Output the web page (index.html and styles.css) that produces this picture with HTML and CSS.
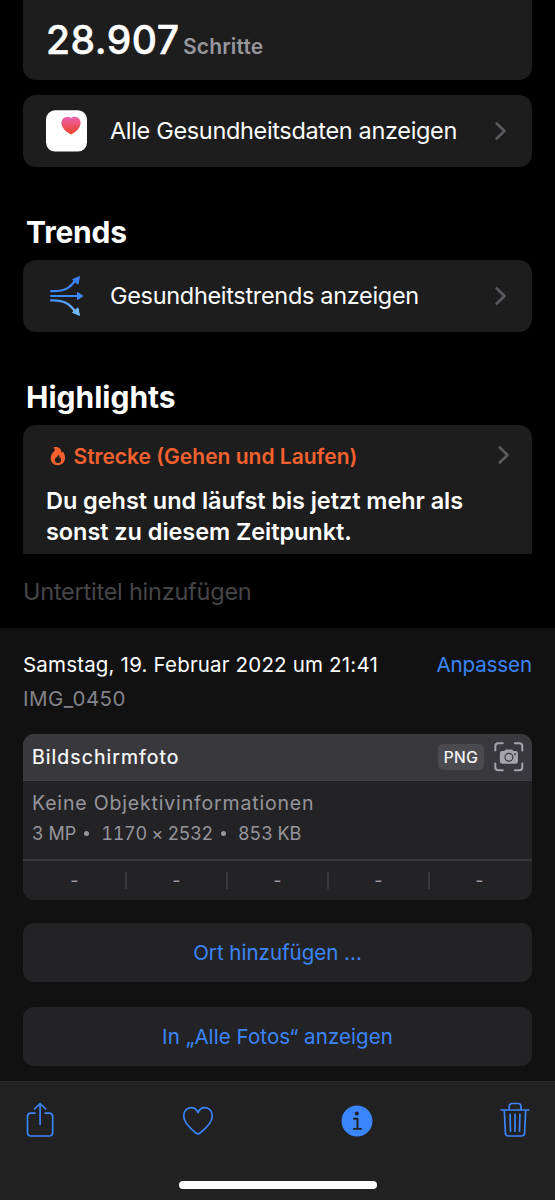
FILE: index.html
```html
<!DOCTYPE html>
<html lang="de">
<head>
<meta charset="utf-8">
<title>IMG_0450</title>
<link rel="stylesheet" href="styles.css">
</head>
<body>
<main class="screen">
  <section class="photo">
    <div class="card steps"><span class="steps-value">28.907</span><span class="steps-unit">Schritte</span></div>
    <div class="card row all-data">
      <svg class="row-icon" width="42" height="42" viewBox="0 0 42 42">
        <defs><linearGradient id="heart" x1="0" y1="0" x2="0" y2="1"><stop offset="0" stop-color="#e964b2"/><stop offset="1" stop-color="#f04323"/></linearGradient></defs>
        <rect x="0" y=".3" width="41" height="41.3" rx="9" fill="#fff"/>
        <path fill="url(#heart)" d="M25.100 8.200C23.300 6.500 20.400 6.400 18.500 7.600C14.500 10.200 14.600 15.300 18 19.200C19.800 21.200 22.200 22.900 24.100 24C24.800 24.400 25.300 24.400 26 24C28 22.900 30.300 21.200 32.100 19.200C35.500 15.300 35.600 10.200 31.600 7.600C29.700 6.400 26.900 6.500 25.100 8.200Z"/>
      </svg>
      <span class="row-label label-all">Alle Gesundheitsdaten anzeigen</span>
      <svg class="chevron" width="12" height="20" viewBox="0 0 12 20"><path d="M1.700 2.500L9.500 10L1.700 17.500"/></svg>
    </div>
    <h2 class="heading heading-trends">Trends</h2>
    <div class="card row">
      <svg class="row-icon" width="42" height="42" viewBox="0 0 42 42">
        <defs><linearGradient id="flow" gradientUnits="userSpaceOnUse" x1="0" y1="22" x2="0" y2="41"><stop offset="0" stop-color="#3f8cff"/><stop offset="1" stop-color="#7cc6fb"/></linearGradient></defs>
        <g fill="none" stroke-width="2.200" stroke-linecap="round">
          <path stroke="#3c87fb" d="M5.100 16.100C19 17 24.300 12.500 30 4.500"/>
          <path stroke="#3c8afb" d="M5.100 21H33"/>
          <path stroke="url(#flow)" d="M5.100 25.400C19 24.800 24.300 29.500 30 37.500"/>
        </g>
        <path fill="#3c82f5" stroke="#3c82f5" stroke-linejoin="round" d="M33.500 1.600L26.500 4.600L32 9.200Z"/>
        <path fill="#3c8afb" stroke="#3c8afb" stroke-linejoin="round" d="M31.500 17.500L37 21L31.500 24.500Z"/>
        <path fill="#70b9fa" stroke="#70b9fa" stroke-linejoin="round" d="M33.500 40.400L26.500 37.400L32 32.800Z"/>
      </svg>
      <span class="row-label label-trends">Gesundheitstrends anzeigen</span>
      <svg class="chevron" width="12" height="20" viewBox="0 0 12 20"><path d="M1.700 2.500L9.500 10L1.700 17.500"/></svg>
    </div>
    <h2 class="heading heading-highlights">Highlights</h2>
    <div class="card highlight">
      <div class="topic">
        <svg class="flame" width="16" height="20" viewBox="0 0 16 20"><path fill="#f4612e" fill-rule="evenodd" d="M3.100 1.300C8.700-.2 11.600 3.100 11.300 6.700C12.100 6.500 12.400 5.800 12.400 5.200C14.300 6.800 15 9.200 15 11.600C15 16.200 12 19.200 7.900 19.200C3.700 19.200.7 16.400.7 12.200C.7 9.200 2.200 7.200 4 5.600C5.100 4.500 5.200 2.600 3.100 1.300ZM8.600 8.500C8.700 11.100 4.900 11.200 4.900 14.100C4.900 16 6.200 17.100 7.900 17.100C9.800 17.100 11.100 15.800 11.100 13.900C11.100 12.900 10.700 12 10.100 11.400C10 12 9.700 12.300 9.300 12.500C9.900 10.900 9.600 9.400 8.600 8.500Z"/></svg>
        <span class="topic-label">Strecke (Gehen und Laufen)</span>
        <svg class="chevron" width="12" height="20" viewBox="0 0 12 20"><path d="M1.700 1.500L9.500 9L1.700 16.500"/></svg>
      </div>
      <p class="summary">Du gehst und läufst bis jetzt mehr als<br>sonst zu diesem Zeitpunkt.</p>
    </div>
  </section>
  <div class="caption"><span>Untertitel hinzufügen</span></div>
  <section class="info">
    <div class="date-row"><span class="date">Samstag, 19. Februar 2022 um 21:41</span><a class="adjust">Anpassen</a></div>
    <div class="filename">IMG_0450</div>
    <div class="meta">
      <div class="meta-head">
        <span class="meta-title">Bildschirmfoto</span>
        <span class="badge">PNG</span>
        <svg width="30" height="30" viewBox="0 0 30 30">
          <path fill="none" stroke="#a5a4aa" stroke-width="2" stroke-linecap="round" d="M1.300 8.500V4.300Q1.300 1.300 4.300 1.300H8.800M20.800 1.300H25.300Q28.300 1.300 28.300 4.300V8.500M28.300 21.400V25.300Q28.300 28.300 25.300 28.300H20.800M8.800 28.300H4.300Q1.300 28.300 1.300 25.300V21.400"/>
          <path fill="#a5a4aa" d="M8.200 9.100H10.100L11.300 7.800Q11.700 7.400 12.300 7.400H17.300Q17.900 7.400 18.300 7.800L19.500 9.100H21.600Q23.900 9.100 23.900 11.300V19.500Q23.900 21.800 21.600 21.800H8.200Q5.900 21.800 5.900 19.500V11.300Q5.900 9.100 8.200 9.100Z"/>
          <circle cx="14.900" cy="15.200" r="3.900" fill="#a5a4aa" stroke="#39393d" stroke-width="1.200"/>
          <circle cx="20.900" cy="12.200" r="1" fill="#39393d"/>
        </svg>
      </div>
      <div class="meta-body">
        <div class="lens">Keine Objektivinformationen</div>
        <div class="specs"><span>3 MP</span><i></i><span class="pixels">1170 × 2532</span><i></i><span class="size">853 KB</span></div>
      </div>
      <div class="exif"><span>-</span><span>-</span><span>-</span><span>-</span><span>-</span></div>
    </div>
    <div class="action action-place"><span>Ort hinzufügen ...</span></div>
    <div class="action action-all"><span>In „Alle Fotos“ anzeigen</span></div>
  </section>
  <nav class="toolbar">
    <div class="tools">
      <svg class="share" width="28" height="36" viewBox="0 0 28 36"><g fill="none" stroke="#3b85fb" stroke-width="1.700" stroke-linecap="round" stroke-linejoin="round"><path d="M9 11.200H5Q1.500 11.200 1.500 14.700V30.500Q1.500 34 5 34H23.200Q26.700 34 26.700 30.500V14.700Q26.700 11.200 23.200 11.200H19.200"/><path d="M14.100 22.300V1.500M8.500 7L14.100 1.500L19.700 7"/></g></svg>
      <svg class="like" width="32" height="30" viewBox="0 0 32 30"><path fill="none" stroke="#3b85fb" stroke-width="1.700" stroke-linejoin="round" d="M16 6.600C14.600 3.600 12.100 1.700 9.200 1.700C4.800 1.700 1.700 5.200 1.700 10C1.700 17 8.800 23 14.300 27.200Q16 28.400 17.700 27.200C23.200 23 30.300 17 30.300 10C30.300 5.200 27.200 1.700 22.800 1.700C19.900 1.700 17.400 3.600 16 6.600Z"/></svg>
      <svg class="details" width="32" height="32" viewBox="0 0 32 32"><circle cx="16" cy="16" r="15.500" fill="#3b85fb"/><circle cx="15.800" cy="8.500" r="2" fill="#202020"/><path fill="none" stroke="#202020" stroke-width="1.900" stroke-linecap="round" stroke-linejoin="round" d="M13 13.700H16.500V23.900M12.800 23.900H20"/></svg>
      <svg class="trash" width="30" height="36" viewBox="0 0 30 36"><g fill="none" stroke="#3b85fb" stroke-width="1.700" stroke-linecap="round" stroke-linejoin="round"><path d="M1.200 8H28.800M9.200 8V4.600Q9.200 1.500 12.200 1.500H18Q21 1.500 21 4.600V8M4.300 8.300L5.400 31Q5.600 34 8.500 34H21.500Q24.400 34 24.600 31L25.700 8.300"/><path d="M10.100 12.400L10.500 29.300M15 12.400V29.300M19.900 12.400L19.500 29.300"/></g></svg>
    </div>
    <div class="home-indicator"></div>
  </nav>
</main>
</body>
</html>
```
FILE: styles.css
```css
* { box-sizing: border-box; }
body { margin: 0; background: #000; color: #fff; font-family: Inter, "Liberation Sans", sans-serif; }
svg { display: block; flex: none; }
.screen { width: 555px; height: 1200px; overflow: hidden; display: flex; flex-direction: column; }
.screen span, .adjust { white-space: nowrap; }
.photo { height: 554px; flex: none; overflow: hidden; padding: 0 23px; }
.card { background: #1d1d1d; border-radius: 13px; }
.steps { height: 80px; border-radius: 0 0 13px 13px; padding-left: 23px; padding-top: 16px; line-height: 47px; display: flex; align-items: baseline; }
.steps-value { font-size: 39px; font-weight: 500; letter-spacing: .5px; -webkit-text-stroke: .5px #fff; }
.steps-unit { font-size: 21px; font-weight: 600; color: #97969d; margin-left: 3.500px; letter-spacing: .15px; }
.row { height: 72px; display: flex; align-items: center; padding: 0 25px 0 23px; }
.all-data { margin-top: 15px; }
.row-label { flex: 1; margin-left: 22px; font-size: 23.500px; line-height: 32px; }
.label-all { letter-spacing: -.34px; }
.label-trends { letter-spacing: -.32px; }
.chevron path { fill: none; stroke: #5a5a5e; stroke-width: 2.600; stroke-linecap: round; stroke-linejoin: round; }
.heading { margin: 0 0 0 3px; height: 93px; padding-top: 45px; font-size: 30px; line-height: 40px; font-weight: 700; }
.heading-trends { letter-spacing: -.2px; }
.highlight { height: 150px; padding: 15px 22px 0 23px; }
.topic { display: flex; align-items: center; height: 32px; color: #f4612e; padding-left: 4px; }
.flame { margin-right: 7.500px; }
.topic-label { flex: 1; font-size: 21px; font-weight: 600; }
.summary { margin: 12.500px 0 0; font-size: 23.500px; line-height: 31.500px; font-weight: 600; letter-spacing: -.06px; }
.caption { height: 74px; flex: none; padding: 22px 23px 0; font-size: 23.500px; line-height: 32px; letter-spacing: -.24px; color: #464648; }
.info { height: 453px; flex: none; background: #111; padding: 22px 23px 0; }
.date-row { display: flex; justify-content: space-between; font-size: 20.500px; line-height: 30px; }
.date { letter-spacing: .18px; }
.adjust { color: #3b85fb; letter-spacing: -.08px; }
.filename { margin-top: 4px; font-size: 20.500px; line-height: 30px; letter-spacing: .45px; color: #838288; }
.meta { margin-top: 20px; height: 166px; border-radius: 11px; overflow: hidden; background: #232325; }
.meta-head { height: 47px; background: #39393d; border-bottom: 1px solid #404044; display: flex; align-items: center; padding: 0 8px 0 9px; }
.meta-title { flex: 1; font-size: 19.500px; font-weight: 400; letter-spacing: 1.050px; -webkit-text-stroke: .2px #fff; }
.badge { width: 46px; height: 26px; border-radius: 5px; background: #4b4a4f; font-size: 15.500px; font-weight: 400; letter-spacing: .5px; -webkit-text-stroke: .2px #fff; line-height: 27px; text-align: center; margin-right: 10px; }
.meta-body { height: 78px; padding: 7px 9px 0; color: #96959b; }
.lens { font-size: 19.500px; line-height: 30px; letter-spacing: .83px; }
.specs { display: flex; align-items: center; font-size: 18px; line-height: 31px; font-variant-numeric: tabular-nums; }
.specs i { width: 5px; height: 5px; border-radius: 50%; background: #96959b; margin: 0 12px 0 8px; }
.pixels { letter-spacing: -.27px; }
.size { letter-spacing: -.1px; }
.exif { height: 41px; padding: 0 3px 0 1px; border-top: 2px solid #39393c; display: grid; grid-template-columns: repeat(5, 1fr); align-items: center; color: #9b9aa0; font-size: 18px; }
.exif span { height: 17px; line-height: 17px; text-align: center; }
.exif span + span { border-left: 2px solid #39393c; }
.action { height: 59px; border-radius: 11px; background: #232325; color: #3b85fb; font-size: 20.500px; display: flex; align-items: center; justify-content: center; }
.action-place { margin-top: 23px; }
.action-all { margin-top: 25px; letter-spacing: .08px; }
.toolbar { height: 119px; flex: none; background: #212121; border-top: 1px solid #2b2b2b; }
.tools { display: grid; grid-template-columns: 28px 32px 32px 30px; justify-content: space-between; align-items: start; height: 78px; padding: 20px 25px 0 26px; }
.like { margin: 4px 0 0 1px; }
.details { margin: 3px 0 0 .5px; }
.home-indicator { width: 198px; height: 8px; border-radius: 4px; background: #fff; margin: 21px auto 0; }
```
